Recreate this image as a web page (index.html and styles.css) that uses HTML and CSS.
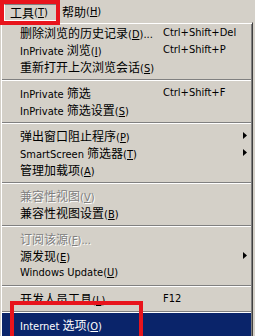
FILE: index.html
```html
<!DOCTYPE html>
<html>
<head>
<meta charset="utf-8">
<link rel="stylesheet" href="styles.css">
</head>
<body>
<div class="screen">
  <div class="menubar">
    <div class="mb-item pressed"><span class="zh">工具</span>(<u>T</u>)</div>
    <div class="mb-item"><span class="zh">帮助</span>(<u>H</u>)</div>
  </div>
  <div class="menu">
    <div class="row"><span class="label"><span class="zh">删除浏览的历史记录</span>(<u>D</u>)...</span><span class="key">Ctrl+Shift+Del</span></div>
    <div class="row"><span class="label">InPrivate <span class="zh">浏览</span>(<u>I</u>)</span><span class="key">Ctrl+Shift+P</span></div>
    <div class="row"><span class="label"><span class="zh">重新打开上次浏览会话</span>(<u>S</u>)</span></div>
    <div class="sep"></div>
    <div class="row"><span class="label">InPrivate <span class="zh">筛选</span></span><span class="key">Ctrl+Shift+F</span></div>
    <div class="row"><span class="label">InPrivate <span class="zh">筛选设置</span>(<u>S</u>)</span></div>
    <div class="sep"></div>
    <div class="row"><span class="label"><span class="zh">弹出窗口阻止程序</span>(<u>P</u>)</span><svg class="arrow" width="4" height="7" viewBox="0 0 4 7"><path d="M0 0L4 3.5L0 7Z" fill="#000"/></svg></div>
    <div class="row"><span class="label">SmartScreen <span class="zh">筛选器</span>(<u>T</u>)</span><svg class="arrow" width="4" height="7" viewBox="0 0 4 7"><path d="M0 0L4 3.5L0 7Z" fill="#000"/></svg></div>
    <div class="row"><span class="label"><span class="zh">管理加载项</span>(<u>A</u>)</span></div>
    <div class="sep"></div>
    <div class="row disabled"><span class="label"><span class="zh">兼容性视图</span>(<u>V</u>)</span></div>
    <div class="row"><span class="label"><span class="zh">兼容性视图设置</span>(<u>B</u>)</span></div>
    <div class="sep"></div>
    <div class="row disabled"><span class="label"><span class="zh">订阅该源</span>(<u>F</u>)...</span></div>
    <div class="row"><span class="label"><span class="zh">源发现</span>(<u>E</u>)</span><svg class="arrow" width="4" height="7" viewBox="0 0 4 7"><path d="M0 0L4 3.5L0 7Z" fill="#000"/></svg></div>
    <div class="row"><span class="label">Windows Update(<u>U</u>)</span></div>
    <div class="sep"></div>
    <div class="row"><span class="label"><span class="zh">开发人员工具</span>(<u>L</u>)</span><span class="key">F12</span></div>
    <div class="sep short"></div>
    <div class="row selected last"><span class="label">Internet <span class="zh">选项</span>(<u>O</u>)</span></div>
  </div>
  <div class="mark mark-top"></div>
  <div class="mark mark-bottom"></div>
</div>
</body>
</html>
```

FILE: styles.css
```css
html, body {
  margin: 0;
  padding: 0;
  background: #d4d0c8;
}
.screen {
  position: relative;
  width: 255px;
  height: 336px;
  overflow: hidden;
  background: #d4d0c8;
  font-family: "DejaVu Sans Condensed", "DejaVu Sans", "Noto Sans CJK SC", sans-serif;
  font-size: 11px;
  color: #000;
}
.zh {
  font-family: "Noto Sans CJK SC", sans-serif;
  font-size: 12px;
}
u {
  text-decoration-thickness: 1px;
  text-underline-offset: 1px;
}
.menubar {
  height: 22px;
  display: flex;
  align-items: stretch;
}
.mb-item {
  display: flex;
  align-items: center;
  padding: 0 6px;
  white-space: nowrap;
}
.mb-item.pressed {
  margin-left: 4px;
  width: 52px;
  box-sizing: border-box;
  padding-left: 5px;
  height: 17px;
  margin-top: 4px;
  border-left: 1px solid #fff;
  border-bottom: 1px solid #fff;
  border-top: 1px solid #808080;
}
.menu {
  width: 253px;
  box-sizing: border-box;
  border: 1px solid;
  border-color: #d4d0c8 #404040 #404040 #d4d0c8;
  box-shadow: inset 1px 1px 0 #fff, inset -1px -1px 0 #808080;
  padding: 1px;
}
.row {
  height: 17px;
  display: flex;
  align-items: center;
  padding-left: 18px;
  padding-right: 4px;
  white-space: nowrap;
}
.row .label {
  width: 143px;
  flex: none;
}
.row .key {
  flex: none;
}
.row .arrow {
  margin-left: auto;
  flex: none;
}
.row.disabled {
  color: #808080;
  text-shadow: 1px 1px 0 #fff;
}
.row.selected {
  background: #0a246a;
  color: #fff;
}
.row.last {
  height: 23px;
}
.sep {
  height: 9px;
  display: flex;
  flex-direction: column;
  justify-content: flex-start;
  padding-top: 4px;
  box-sizing: border-box;
}
.sep::before {
  content: "";
  display: block;
  height: 1px;
  background: #808080;
  border-bottom: 1px solid #fff;
}
.sep.short {
  height: 6px;
}
.mark {
  position: absolute;
  border: 4px solid #e8141c;
  box-sizing: border-box;
}
.mark-top {
  left: 0;
  top: 0;
  width: 60px;
  height: 25px;
}
.mark-bottom {
  left: 10px;
  top: 301px;
  width: 133px;
  height: 44px;
}
```
